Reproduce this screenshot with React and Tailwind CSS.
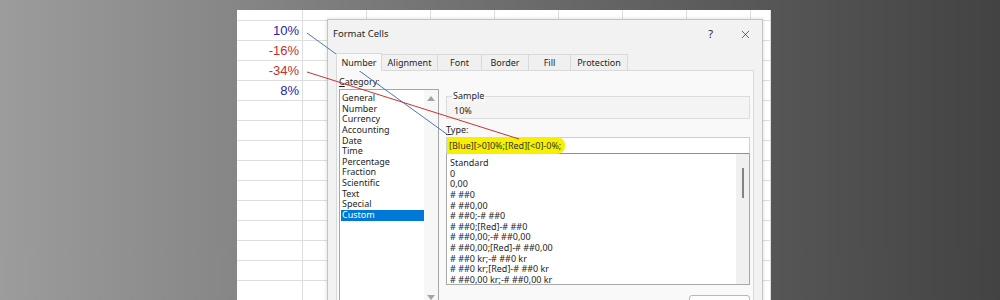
import { X } from "lucide-react";

const cols = [66, 64, 64, 64, 64, 64, 64, 64, 20];
const rowHeights = [11, 20, 20, 20, 20, 20, 20, 20, 20, 20, 20, 20, 20, 20, 20];

const values = {
  1: { text: "10%", color: "text-[#2424a6]" },
  2: { text: "-16%", color: "text-[#c62d2d]" },
  3: { text: "-34%", color: "text-[#c62d2d]" },
  4: { text: "8%", color: "text-[#2424a6]" },
};

const tabs = [
  { label: "Number", w: "w-[46px]", active: true },
  { label: "Alignment", w: "w-[56px]" },
  { label: "Font", w: "w-[44px]" },
  { label: "Border", w: "w-[47px]" },
  { label: "Fill", w: "w-[42px]" },
  { label: "Protection", w: "w-[57px]" },
];

const categories = [
  "General", "Number", "Currency", "Accounting", "Date", "Time",
  "Percentage", "Fraction", "Scientific", "Text", "Special", "Custom",
];

const types = [
  "Standard",
  "0",
  "0,00",
  "# ##0",
  "# ##0,00",
  "# ##0;-# ##0",
  "# ##0;[Red]-# ##0",
  "# ##0,00;-# ##0,00",
  "# ##0,00;[Red]-# ##0,00",
  "# ##0 kr;-# ##0 kr",
  "# ##0 kr;[Red]-# ##0 kr",
  "# ##0,00 kr;-# ##0,00 kr",
];

function Sheet() {
  return (
    <div className="flex flex-col">
      {rowHeights.map((h, r) => (
        <div key={r} className="flex" style={{ height: h }}>
          {cols.map((w, c) => (
            <div
              key={c}
              className="shrink-0 border-r border-b border-[#dedede] flex items-center justify-end pr-[3px]"
              style={{ width: w }}
            >
              {c === 0 && values[r] && (
                <span className={`text-[13px] leading-none ${values[r].color}`}>{values[r].text}</span>
              )}
            </div>
          ))}
        </div>
      ))}
    </div>
  );
}

function Dialog() {
  return (
    <div className="absolute left-[90px] top-[9px] w-[436px] h-[300px] bg-[#f2f2f2] border border-[#c4c4c4] font-['Noto_Sans',sans-serif] text-[9px] text-[#1e1e1e] shadow-[0_0_4px_rgba(0,0,0,0.15)]">
      {/* title bar */}
      <div className="h-[27px] flex items-center pl-[5px] pr-[10px]">
        <span className="text-[9.5px] mt-[2px]">Format Cells</span>
        <span className="ml-auto mr-[26px] text-[11px] mt-[2px]">?</span>
        <X size={13} strokeWidth={1.2} className="mt-[2px]" />
      </div>

      {/* tabs */}
      <div className="mt-[5px] pl-[8px] flex items-end h-[18px]">
        {tabs.map((t) => (
          <div
            key={t.label}
            className={`${t.w} flex items-center justify-center border-t border-r border-[#d9d9d9] ${
              t.active
                ? "h-[18px] bg-[#f9f9f9] border-l relative z-10 -mb-px"
                : "h-[16px] bg-[#f0f0f0]"
            }`}
          >
            {t.label}
          </div>
        ))}
      </div>

      {/* panel */}
      <div className="ml-[8px] w-[418px] h-[240px] bg-[#f9f9f9] border border-[#d9d9d9] flex pl-[2px]">
        {/* category */}
        <div className="flex flex-col">
          <div className="mt-[5px] h-[12px] leading-[12px]">
            <span className="underline">C</span>ategory:
          </div>
          <div className="mt-px w-[100px] h-[216px] bg-white border border-[#a6a6a6] flex">
            <div className="w-[84px] pt-[3px] pl-px">
              {categories.map((c) => (
                <div
                  key={c}
                  className={`h-[10.65px] leading-[10.65px] pl-px ${
                    c === "Custom" ? "bg-[#0078d7] text-white" : ""
                  }`}
                >
                  {c}
                </div>
              ))}
            </div>
            <div className="w-[14px] bg-[#f7f7f7] flex flex-col items-center justify-between pt-[6px] pb-[4px]">
              <div className="w-0 h-0 border-l-[4px] border-r-[4px] border-b-[5px] border-l-transparent border-r-transparent border-b-[#a3a3a3]" />
              <div className="w-0 h-0 border-l-[4px] border-r-[4px] border-t-[5px] border-l-transparent border-r-transparent border-t-[#a3a3a3]" />
            </div>
          </div>
        </div>

        {/* right side */}
        <div className="ml-[7px] w-[304px] flex flex-col">
          <fieldset className="mt-[19px] border border-[#dcdcdc] bg-[#f4f4f4] pl-[7px] pt-[5px] pb-px">
            <legend className="ml-[-2px] px-px leading-[12px] bg-[#f9f9f9]">Sample</legend>
            <div className="leading-[12px] -mt-[2px]">10%</div>
          </fieldset>

          <div className="mt-[5px] h-[12px] leading-[12px]">
            <span className="underline">T</span>ype:
          </div>

          <div className="mt-px h-[17px] bg-white border border-[#cfcfcf] border-b-[#8f8f8f] flex items-center">
            <div className="h-[17px] -my-px bg-[#f6ef00] rounded-r-[8px] pl-[2px] pr-[4px] flex items-center text-[#333]">
              [Blue][&gt;0]0%;[Red][&lt;0]-0%;
            </div>
          </div>

          <div className="h-[131px] bg-white border border-[#a8a8a8] border-t-0 flex">
            <div className="flex-1 pt-[4px] pl-[3px]">
              {types.map((t) => (
                <div key={t} className="h-[10.65px] leading-[10.65px] whitespace-pre">
                  {t}
                </div>
              ))}
            </div>
            <div className="w-[13px] bg-[#f0f0f0] flex justify-center pt-[14px]">
              <div className="w-[2px] h-[30px] bg-[#858585]" />
            </div>
          </div>

          <div className="mt-[10px] ml-auto w-[61px] h-[20px] bg-[#fdfdfd] border border-[#b8b8b8] rounded-[3px]" />
        </div>
      </div>
    </div>
  );
}

export default function App() {
  return (
    <div className="relative w-[1000px] h-[300px] overflow-hidden bg-gradient-to-r from-[#9c9c9c] to-[#434343] pt-[10px] font-['Liberation_Sans',sans-serif]">
      <div className="relative ml-[237px] w-[534px] h-[290px] bg-white overflow-hidden">
        <Sheet />
        <Dialog />
      </div>

      <svg className="absolute inset-0 pointer-events-none" width="1000" height="300">
        <line x1="307" y1="33" x2="448" y2="135" stroke="#4b78b4" strokeWidth="1" />
        <line x1="307" y1="72" x2="519" y2="139" stroke="#cf2f2f" strokeWidth="1" />
      </svg>
    </div>
  );
}
